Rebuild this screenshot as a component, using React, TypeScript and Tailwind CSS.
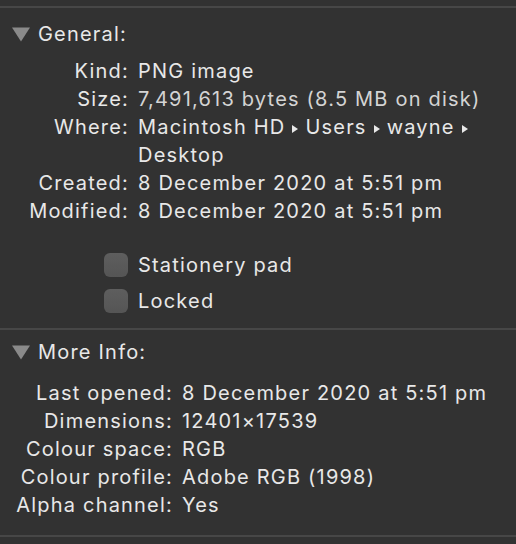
import React from "react";

const Tri = () => (
  <svg width="18" height="15" viewBox="0 0 18 15" className="shrink-0">
    <path d="M0 0.5 L18 0.5 L9 14.5 Z" fill="#8a8a8a" />
  </svg>
);

const Sep = () => (
  <svg width="6" height="8" viewBox="0 0 6 8" className="inline-block mx-[7px] align-middle">
    <path d="M0 0 L6 4 L0 8 Z" fill="#e8e8e8" />
  </svg>
);

const Row = ({ label, value, w, dim }: { label: string; value: React.ReactNode; w: string; dim?: boolean }) => (
  <div className="flex h-[28px] items-center whitespace-nowrap">
    <div className={`${w} shrink-0 text-right pr-[9px]`}>{label}</div>
    <div className={dim ? "text-[#d4d4d4]" : ""}>{value}</div>
  </div>
);

const Box = () => (
  <div className="w-[24px] h-[24px] rounded-[6px] bg-gradient-to-b from-[#5e5e5e] to-[#555555] shrink-0" />
);

export default function App() {
  return (
    <div
      className="w-[516px] h-[544px] bg-[#323232] text-[#e8e8e8] text-[20px] tracking-[1.2px] overflow-hidden"
      style={{ fontFamily: "Inter, 'Liberation Sans', sans-serif" }}
    >
      <div className="h-[6px]" />
      <div className="h-[2px] bg-[#474747]" />
      <div className="flex items-center h-[40px] pl-[12px] gap-[8px] mt-[6px]">
        <Tri />
        <span>General:</span>
      </div>
      <div className="mt-[3px]">
        <Row w="w-[138px]" label="Kind:" value="PNG image" />
        <Row w="w-[138px]" label="Size:" value="7,491,613 bytes (8.5 MB on disk)" dim />
        <Row
          w="w-[138px]"
          label="Where:"
          value={
            <>
              Macintosh HD<Sep />Users<Sep />wayne<Sep />
            </>
          }
        />
        <Row w="w-[138px]" label="" value="Desktop" />
        <Row w="w-[138px]" label="Created:" value="8 December 2020 at 5:51 pm" />
        <Row w="w-[138px]" label="Modified:" value="8 December 2020 at 5:51 pm" />
      </div>
      <div className="mt-[28px] pl-[104px] flex flex-col gap-[12px]">
        <div className="flex items-center gap-[10px] h-[24px]">
          <Box />
          <span>Stationery pad</span>
        </div>
        <div className="flex items-center gap-[10px] h-[24px]">
          <Box />
          <span>Locked</span>
        </div>
      </div>
      <div className="mt-[15px] h-[2px] bg-[#474747]" />
      <div className="flex items-center h-[40px] pl-[12px] gap-[8px] mt-[2px]">
        <Tri />
        <span>More Info:</span>
      </div>
      <div className="mt-[7px]">
        <Row w="w-[182px]" label="Last opened:" value="8 December 2020 at 5:51 pm" />
        <Row w="w-[182px]" label="Dimensions:" value="12401×17539" />
        <Row w="w-[182px]" label="Colour space:" value="RGB" />
        <Row w="w-[182px]" label="Colour profile:" value="Adobe RGB (1998)" />
        <Row w="w-[182px]" label="Alpha channel:" value="Yes" />
      </div>
      <div className="mt-[16px] h-[2px] bg-[#474747]" />
    </div>
  );
}
